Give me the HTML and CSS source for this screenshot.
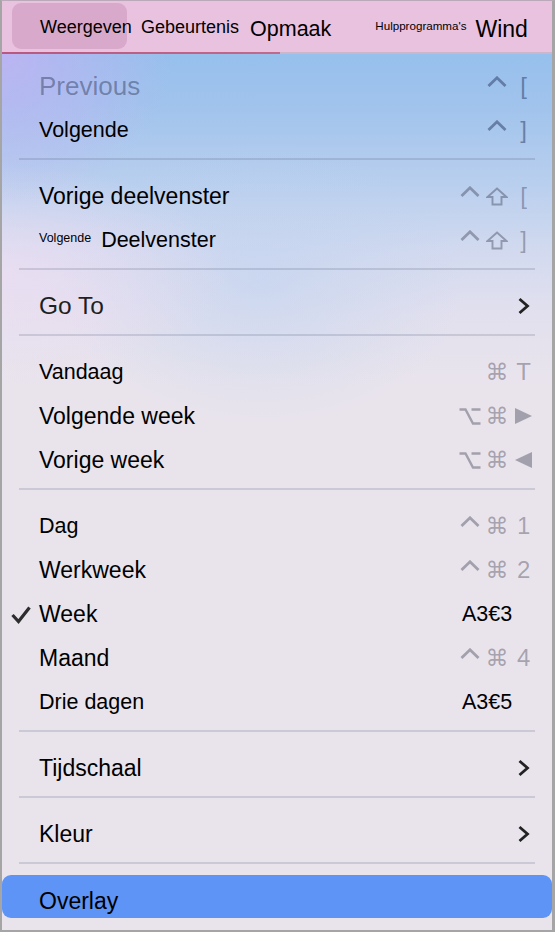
FILE: index.html
```html
<!DOCTYPE html>
<html lang="nl">
<head>
<meta charset="UTF-8">
<meta name="viewport" content="width=device-width, initial-scale=1.0">
<title>Weergave</title>
<link rel="stylesheet" href="styles.css">
</head>
<body>
  <div class="window">
    <div class="menubar">
      <span class="menu-title menu-title--active">Weergeven</span>
      <span class="menu-title menu-title--event">Gebeurtenis</span>
      <span class="menu-title menu-title--format">Opmaak</span>
      <span class="menu-title menu-title--tools">Hulpprogramma's</span>
      <span class="menu-title menu-title--window">Wind</span>
    </div>

    <div class="menu">
      <div class="group group--first">
        <div class="item item--disabled">
          <span class="check"></span>
          <span class="label label--xl">Previous</span>
          <span class="keys keys--dark">
            <span class="key"></span>
            <span class="key key--caret"><svg width="20" height="11" viewBox="0 0 20 11"><polyline points="1.5,10 10,1.8 18.5,10" /></svg></span>
            <span class="key">[</span>
          </span>
        </div>
        <div class="item">
          <span class="check"></span>
          <span class="label label--md">Volgende</span>
          <span class="keys keys--dark">
            <span class="key"></span>
            <span class="key key--caret"><svg width="20" height="11" viewBox="0 0 20 11"><polyline points="1.5,10 10,1.8 18.5,10" /></svg></span>
            <span class="key">]</span>
          </span>
        </div>
      </div>
      <div class="separator"></div>

      <div class="group">
        <div class="item">
          <span class="check"></span>
          <span class="label">Vorige deelvenster</span>
          <span class="keys">
            <span class="key key--caret"><svg width="20" height="11" viewBox="0 0 20 11"><polyline points="1.5,10 10,1.8 18.5,10" /></svg></span>
            <span class="key"><svg class="shift" width="22" height="19" viewBox="0 0 22 19"><polygon points="11,1.5 20.5,10 15.5,10 15.5,17.5 6.5,17.5 6.5,10 1.5,10" /></svg></span>
            <span class="key">[</span>
          </span>
        </div>
        <div class="item">
          <span class="check"></span>
          <span class="label label--md"><span class="label-tiny">Volgende</span>Deelvenster</span>
          <span class="keys">
            <span class="key key--caret"><svg width="20" height="11" viewBox="0 0 20 11"><polyline points="1.5,10 10,1.8 18.5,10" /></svg></span>
            <span class="key"><svg class="shift" width="22" height="19" viewBox="0 0 22 19"><polygon points="11,1.5 20.5,10 15.5,10 15.5,17.5 6.5,17.5 6.5,10 1.5,10" /></svg></span>
            <span class="key">]</span>
          </span>
        </div>
      </div>
      <div class="separator"></div>

      <div class="group">
        <div class="item">
          <span class="check"></span>
          <span class="label label--goto">Go To</span>
          <span class="keys">
            <span class="key"></span>
            <span class="key"></span>
            <span class="key"><svg class="chevron" width="13" height="18" viewBox="0 0 13 18"><polyline points="2.5,2 10.5,9 2.5,16" /></svg></span>
          </span>
        </div>
      </div>
      <div class="separator"></div>

      <div class="group">
        <div class="item">
          <span class="check"></span>
          <span class="label label--md">Vandaag</span>
          <span class="keys">
            <span class="key"></span>
            <span class="key key--cmd">⌘</span>
            <span class="key">T</span>
          </span>
        </div>
        <div class="item">
          <span class="check"></span>
          <span class="label">Volgende week</span>
          <span class="keys">
            <span class="key"><svg class="option" width="22" height="17" viewBox="0 0 22 17"><path d="M0.5 1.5H6.5L14 15.5H21.5M12.5 1.5H21.5" /></svg></span>
            <span class="key key--cmd">⌘</span>
            <span class="key"><svg class="arrow" width="17" height="16" viewBox="0 0 17 16"><polygon points="0,0 17,8 0,16" /></svg></span>
          </span>
        </div>
        <div class="item">
          <span class="check"></span>
          <span class="label">Vorige week</span>
          <span class="keys">
            <span class="key"><svg class="option" width="22" height="17" viewBox="0 0 22 17"><path d="M0.5 1.5H6.5L14 15.5H21.5M12.5 1.5H21.5" /></svg></span>
            <span class="key key--cmd">⌘</span>
            <span class="key"><svg class="arrow" width="17" height="16" viewBox="0 0 17 16"><polygon points="17,0 0,8 17,16" /></svg></span>
          </span>
        </div>
      </div>
      <div class="separator"></div>

      <div class="group">
        <div class="item">
          <span class="check"></span>
          <span class="label label--md">Dag</span>
          <span class="keys">
            <span class="key key--caret"><svg width="20" height="11" viewBox="0 0 20 11"><polyline points="1.5,10 10,1.8 18.5,10" /></svg></span>
            <span class="key key--cmd">⌘</span>
            <span class="key">1</span>
          </span>
        </div>
        <div class="item">
          <span class="check"></span>
          <span class="label">Werkweek</span>
          <span class="keys">
            <span class="key key--caret"><svg width="20" height="11" viewBox="0 0 20 11"><polyline points="1.5,10 10,1.8 18.5,10" /></svg></span>
            <span class="key key--cmd">⌘</span>
            <span class="key">2</span>
          </span>
        </div>
        <div class="item">
          <span class="check"><svg width="22" height="19" viewBox="0 0 22 19"><polyline points="2.5,10 8.5,16.5 19.5,2.5" /></svg></span>
          <span class="label">Week</span>
          <span class="keys keys--text">A3€3</span>
        </div>
        <div class="item">
          <span class="check"></span>
          <span class="label">Maand</span>
          <span class="keys">
            <span class="key key--caret"><svg width="20" height="11" viewBox="0 0 20 11"><polyline points="1.5,10 10,1.8 18.5,10" /></svg></span>
            <span class="key key--cmd">⌘</span>
            <span class="key">4</span>
          </span>
        </div>
        <div class="item">
          <span class="check"></span>
          <span class="label label--md">Drie dagen</span>
          <span class="keys keys--text">A3€5</span>
        </div>
      </div>
      <div class="separator"></div>

      <div class="group">
        <div class="item">
          <span class="check"></span>
          <span class="label">Tijdschaal</span>
          <span class="keys">
            <span class="key"></span>
            <span class="key"></span>
            <span class="key"><svg class="chevron" width="13" height="18" viewBox="0 0 13 18"><polyline points="2.5,2 10.5,9 2.5,16" /></svg></span>
          </span>
        </div>
      </div>
      <div class="separator"></div>

      <div class="group">
        <div class="item">
          <span class="check"></span>
          <span class="label">Kleur</span>
          <span class="keys">
            <span class="key"></span>
            <span class="key"></span>
            <span class="key"><svg class="chevron" width="13" height="18" viewBox="0 0 13 18"><polyline points="2.5,2 10.5,9 2.5,16" /></svg></span>
          </span>
        </div>
      </div>
      <div class="separator"></div>

      <div class="group group--last">
        <div class="item item--selected">
          <span class="check"></span>
          <span class="label">Overlay</span>
        </div>
      </div>
    </div>
  </div>
</body>
</html>
```

FILE: styles.css
```css
* {
  box-sizing: border-box;
}
body {
  margin: 0;
  font-family: "Liberation Sans", Arial, sans-serif;
  color: #000;
  background: #fff;
}
.window {
  width: 555px;
  height: 932px;
  display: flex;
  flex-direction: column;
  border: 2px solid #a5a5a5;
  border-top: 1px solid #bba8b8;
  border-right-width: 3px;
  overflow: hidden;
}

/* top menu bar */
.menubar {
  display: flex;
  align-items: flex-start;
  height: 53px;
  padding: 2px 0 0 10px;
  background: #e9c2e0;
  border-style: solid;
  border-width: 0 0 2px 0;
  border-image: linear-gradient(to right, #b9577f 0, #c2698c 278px, #ccb6cc 278px, #ccb6cc 100%) 1;
}
.menu-title {
  padding-top: 3px;
  line-height: 43px;
  font-size: 18px;
  white-space: nowrap;
}
.menu-title--active {
  width: 115px;
  padding-left: 28px;
  background: #d8a9ca;
  border-radius: 9px;
}
.menu-title--event {
  margin-left: 14px;
}
.menu-title--format {
  margin: 2px 0 0 11px;
  font-size: 21.5px;
}
.menu-title--tools {
  margin: -2px 0 0 44px;
  font-size: 11.6px;
}
.menu-title--window {
  margin: 2px 0 0 9px;
  font-size: 23px;
}

/* dropdown body */
.menu {
  flex: 1;
  background:
    radial-gradient(ellipse 170px 150px at 0 0, rgba(196, 178, 244, 0.8), rgba(196, 178, 244, 0)),
    radial-gradient(ellipse 230px 110px at 0 220px, rgba(240, 222, 242, 0.7), rgba(240, 222, 242, 0)),
    radial-gradient(ellipse 200px 140px at 260px 230px, rgba(190, 210, 240, 0.55), rgba(190, 210, 240, 0)),
    linear-gradient(180deg, #97c0ec 0, #a0c3ec 50px, #b9cfee 130px, #d3daef 200px, #e2e0ee 260px, #e9e4ec 330px, #e9e4ec 100%);
}
.group {
  padding: 14px 0 6px;
}
.group--first {
  padding-top: 10px;
}
.group--last {
  padding: 11px 0 0;
}
.separator {
  height: 2px;
  margin: 0 17px;
  background: rgba(60, 70, 100, 0.17);
}

.item {
  display: grid;
  grid-template-columns: 37px 1fr 80px;
  align-items: center;
  height: 44px;
  padding-right: 15px;
}
.item--disabled .label {
  color: rgba(50, 62, 95, 0.48);
}
.item--selected {
  height: 43px;
  padding-top: 9px;
  background: #5e94f5;
  border-radius: 9px;
}

.check {
  display: flex;
  justify-content: center;
}
.check svg {
  fill: none;
  stroke: #2d2d2d;
  stroke-width: 3.2;
}

.label {
  font-size: 23px;
  white-space: nowrap;
}
.label--md {
  font-size: 21.5px;
}
.label--xl {
  font-size: 26px;
}
.label--goto {
  font-size: 24.5px;
  color: #1f1f1f;
}
.label-tiny {
  margin-right: 10px;
  font-size: 12.5px;
  vertical-align: 5px;
}

/* keyboard shortcut columns */
.keys {
  display: grid;
  grid-template-columns: repeat(3, 1fr);
  align-items: center;
  justify-items: center;
  font-size: 24px;
  color: rgba(40, 40, 62, 0.36);
}
.keys--dark {
  color: rgba(40, 55, 95, 0.5);
}
.keys--text {
  display: block;
  padding-left: 5px;
  font-size: 21.5px;
  color: #000;
}
.key {
  display: flex;
  justify-content: center;
  line-height: 1;
}
.key--caret {
  align-self: start;
  margin-top: 2px;
}
.key--cmd {
  font-family: "DejaVu Sans", sans-serif;
  font-size: 23px;
}
.key svg {
  stroke: currentColor;
  fill: none;
}
.key--caret svg {
  stroke-width: 2.8;
}
.shift {
  stroke-width: 1.9;
}
.option {
  stroke-width: 2.4;
}
.arrow {
  fill: currentColor !important;
  stroke: none !important;
}
.chevron {
  stroke: #222 !important;
  stroke-width: 2.8;
}
```
